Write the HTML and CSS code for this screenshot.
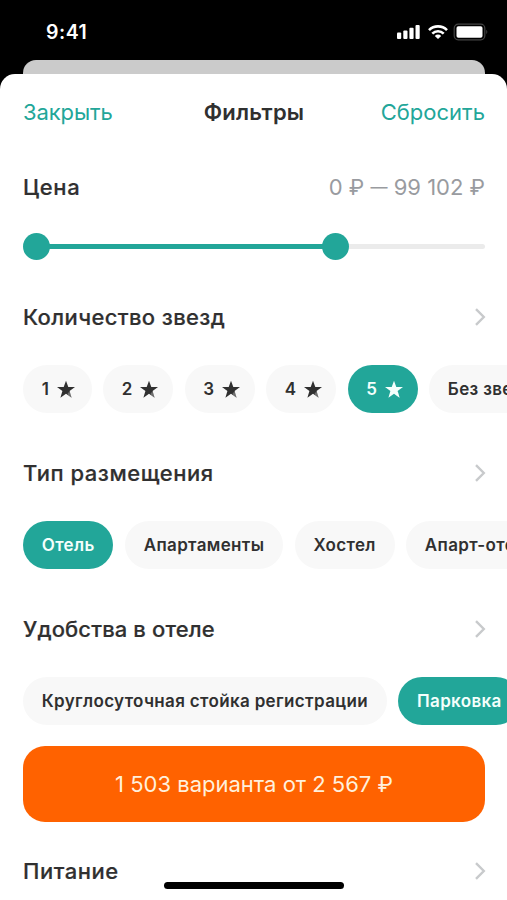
FILE: index.html
```html
<!DOCTYPE html>
<html lang="ru">
<head>
<meta charset="utf-8">
<title>Фильтры</title>
<link rel="stylesheet" href="styles.css">
</head>
<body>
<svg class="defs" width="0" height="0">
  <symbol id="chevron" viewBox="0 0 12 20"><path d="M2 2.2 9.8 10 2 17.8" fill="none" stroke="#c8cacc" stroke-width="2.4"/></symbol>
  <symbol id="star" viewBox="0 0 20 19"><path d="M10 .8 12.3 7H19l-5.4 4.1 2 6.6L10 13.8l-5.6 3.9 2-6.6L1 7h6.7z" fill="currentColor"/><path class="shade" d="m11.6 13 2.4-1.2 1.6 5.9-3.6-2.5z"/></symbol>
</svg>
<div class="screen">
  <div class="status">
    <span class="time">9:41</span>
    <svg class="indicators" width="92" height="18" viewBox="0 0 92 18">
      <g fill="#fff">
        <rect x="1" y="9.5" width="4.2" height="6.5" rx="1"/><rect x="7.3" y="7.5" width="4.2" height="8.5" rx="1"/><rect x="13.4" y="4.8" width="4.2" height="11.2" rx="1"/><rect x="19.5" y="2" width="4.2" height="14" rx="1"/>
        <rect x="60.5" y="3.3" width="26" height="11.5" rx="1.8"/>
      </g>
      <g fill="none" stroke="#fff" stroke-width="2.6"><path d="M33 7.1a12.8 12.8 0 0 1 18 0"/><path d="M36.3 10.6a8.1 8.1 0 0 1 11.4 0"/></g>
      <path d="M38.8 12.9a4.6 4.6 0 0 1 6.4 0L42 16.1z" fill="#fff"/>
      <rect x="58.2" y="1.2" width="30.6" height="15.6" rx="4" fill="none" stroke="#444" stroke-width="1.2"/>
      <path d="M90.3 6.8q2 2.2 0 4.4z" fill="#444"/>
    </svg>
  </div>
  <div class="back-card"></div>
  <main class="sheet">
    <header class="row head"><a class="close">Закрыть</a><h1>Фильтры</h1><a class="reset">Сбросить</a></header>
    <section class="price">
      <div class="row"><h2 class="t-price">Цена</h2><span class="range">0 ₽ <span class="dash">—</span> 99 102 ₽</span></div>
      <div class="slider"><i class="knob"></i><i class="fill"></i><i class="knob"></i><i class="rest"></i></div>
    </section>
    <section class="stars">
      <div class="row"><h2 class="t-stars">Количество звезд</h2><svg class="chev"><use href="#chevron"/></svg></div>
      <div class="chips">
        <span class="chip star first">1<svg><use href="#star"/></svg></span>
        <span class="chip star">2<svg><use href="#star"/></svg></span>
        <span class="chip star">3<svg><use href="#star"/></svg></span>
        <span class="chip star">4<svg><use href="#star"/></svg></span>
        <span class="chip star on">5<svg><use href="#star"/></svg></span>
        <span class="chip">Без звезд</span>
      </div>
    </section>
    <section>
      <div class="row"><h2 class="t-type">Тип размещения</h2><svg class="chev"><use href="#chevron"/></svg></div>
      <div class="chips">
        <span class="chip on">Отель</span><span class="chip">Апартаменты</span><span class="chip">Хостел</span><span class="chip">Апарт-отель</span>
      </div>
    </section>
    <section>
      <div class="row"><h2 class="t-amen">Удобства в отеле</h2><svg class="chev"><use href="#chevron"/></svg></div>
      <div class="chips">
        <span class="chip">Круглосуточная стойка регистрации</span><span class="chip on">Парковка</span>
      </div>
    </section>
    <button class="submit"><span>1 503 варианта от 2 567 ₽</span></button>
    <div class="row meal"><h2 class="t-meal">Питание</h2><svg class="chev"><use href="#chevron"/></svg></div>
  </main>
  <div class="home"></div>
</div>
</body>
</html>
```

FILE: styles.css
```css
* { box-sizing: border-box; }
body { margin: 0; background: #000; font-family: Inter, "Liberation Sans", sans-serif; color: #303030; }
.defs { position: absolute; }
.screen { position: relative; width: 507px; height: 900px; overflow: hidden; display: flex; flex-direction: column; }
.status { height: 60px; padding: 4px 19px 0 46px; display: flex; align-items: center; justify-content: space-between; color: #fff; flex: none; }
.time { font-size: 19.5px; font-weight: 600; letter-spacing: .5px; }
.back-card { height: 13.5px; margin: 0 22px 0 23px; background: #cbcbcb; border-radius: 13px 13px 0 0; flex: none; }
.sheet { flex: 1; background: #fff; border-radius: 15px 15px 0 0; padding: 22.5px 22px 0 23px; }
.row { height: 32px; display: flex; align-items: center; justify-content: space-between; }
.head { display: grid; grid-template-columns: 1fr auto 1fr; }
h1, h2 { margin: 0; font-size: 22px; font-weight: 600; white-space: nowrap; }
h1 { letter-spacing: .2px; }
h2 { font-weight: 500; -webkit-text-stroke: .2px #303030; }
.t-price { letter-spacing: .6px; }
.t-stars { letter-spacing: .37px; }
.t-type { letter-spacing: .53px; }
.t-amen { letter-spacing: .12px; }
.t-meal { letter-spacing: .55px; }
.close, .reset { font-size: 22px; color: #22a699; }
.close { letter-spacing: -.1px; }
.reset { text-align: right; }
.range { font-size: 22px; color: #999ba0; white-space: nowrap; }
.dash { font-size: 17px; vertical-align: 2px; line-height: 1; }
.price { margin-top: 43px; }
.slider { margin-top: 30px; height: 27px; display: flex; align-items: center; }
.knob { width: 27px; height: 27px; border-radius: 50%; background: #22a699; }
.fill { width: 274px; height: 5.5px; margin: 0 -1px; background: #22a699; }
.rest { flex: 1; height: 5px; background: #ebebeb; border-radius: 0 3px 3px 0; }
.stars { margin-top: 41px; }
.chev { width: 12px; height: 20px; margin-right: -1px; }
.chips { display: flex; gap: 11.5px; margin: 32px -22px 0 0; height: 48.5px; overflow: hidden; }
section + section:not(.stars) { margin-top: 43.5px; }
.chip { flex: none; height: 48px; border-radius: 24px; padding: 0 18.8px; background: #f8f8f8; display: flex; align-items: center; font-size: 17px; font-weight: 600; letter-spacing: .34px; white-space: nowrap; }
.chip.on { background: #22a699; color: #f4fffc; }
.star { width: 70px; gap: 6.5px; padding-right: 0; }
.first { width: 68.5px; gap: 7px; }
.star svg { width: 20px; height: 19px; flex: none; }
.shade { fill: #fff; opacity: .3; }
.submit { display: flex; width: 462px; height: 76px; margin-top: 20px; border: 0; border-radius: 22px; background: #ff6200; color: #fff0dc; font: 400 22px Inter, "Liberation Sans", sans-serif; align-items: center; justify-content: center; white-space: nowrap; }
.meal { margin-top: 33px; }
.home { position: absolute; left: 164px; top: 882px; width: 180px; height: 7px; border-radius: 4px; background: #000; }
```
